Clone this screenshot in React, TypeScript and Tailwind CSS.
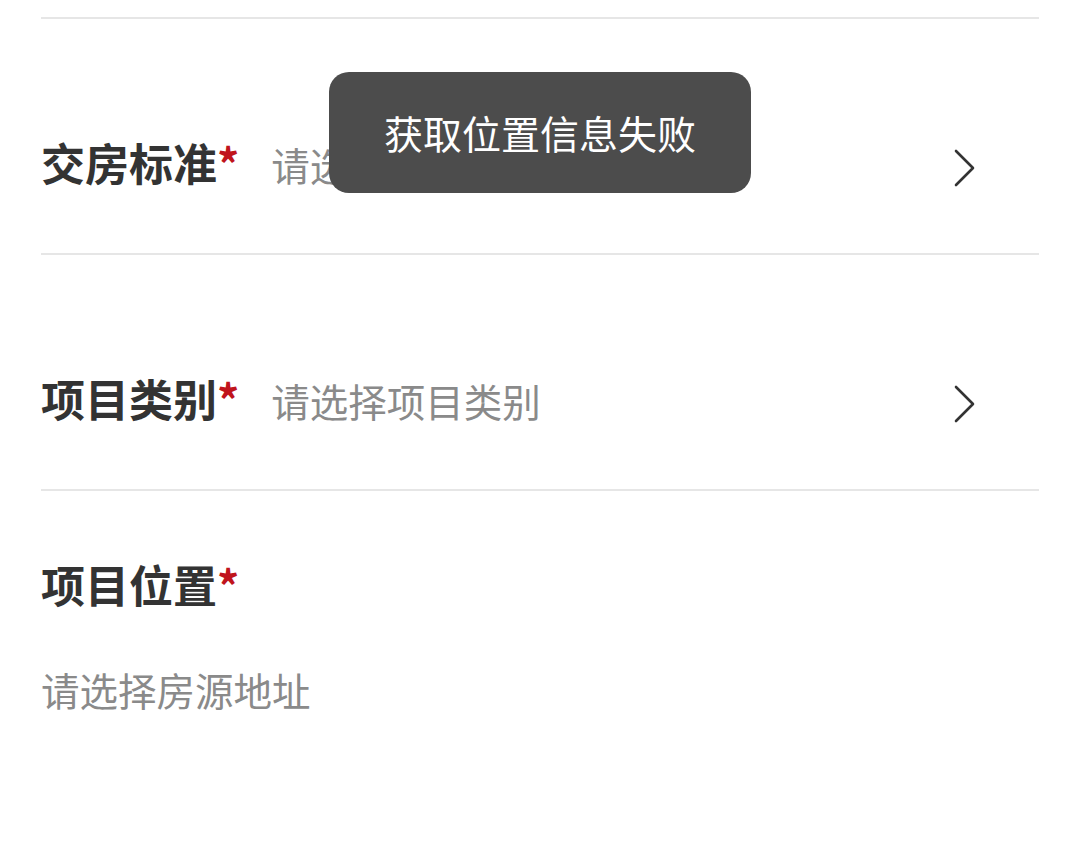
import React from "react";

const Chevron = () => (
  <svg width="24" height="40" viewBox="0 0 24 40" fill="none" className="block">
    <path d="M4 3 L21 20 L4 37" stroke="#333333" strokeWidth="2.6" strokeLinecap="round" strokeLinejoin="round" />
  </svg>
);

const Label = ({ text }: { text: string }) => (
  <div className="flex items-baseline shrink-0">
    <span className="text-[44px] leading-[44px] font-bold text-[#333333]">{text}</span>
    <span className="text-[44px] leading-[44px] font-bold text-[#c0141c]">*</span>
  </div>
);

const SelectRow = ({ label, placeholder }: { label: string; placeholder: string }) => (
  <div className="h-[234px] pt-[121px] flex items-start">
    <div className="flex items-baseline flex-1">
      <Label text={label} />
      <span className="ml-[32px] text-[38.5px] leading-[44px] text-[#8a8a8a]">{placeholder}</span>
    </div>
    <div className="mr-[63px] mt-[8px]">
      <Chevron />
    </div>
  </div>
);

export default function App() {
  return (
    <div className="relative w-[1080px] h-[845px] bg-white overflow-hidden font-['Noto_Sans_CJK_SC','Noto_Sans',sans-serif]">
      <div className="px-[41px]">
        <div className="h-[17px]" />
        <div className="h-[2px] bg-[#e6e6e6]" />
        <SelectRow label="交房标准" placeholder="请选择交房标准" />
        <div className="h-[2px] bg-[#e6e6e6]" />
        <SelectRow label="项目类别" placeholder="请选择项目类别" />
        <div className="h-[2px] bg-[#e6e6e6]" />
        <div className="pt-[71px]">
          <Label text="项目位置" />
          <div className="mt-[64px] text-[38.5px] leading-[38px] text-[#8a8a8a]">请选择房源地址</div>
        </div>
      </div>

      <div className="absolute left-[329px] top-[72px] w-[422px] h-[121px] rounded-[20px] bg-[#4c4c4c] flex items-center justify-center">
        <span className="text-[39px] leading-[39px] text-white">获取位置信息失败</span>
      </div>
    </div>
  );
}
